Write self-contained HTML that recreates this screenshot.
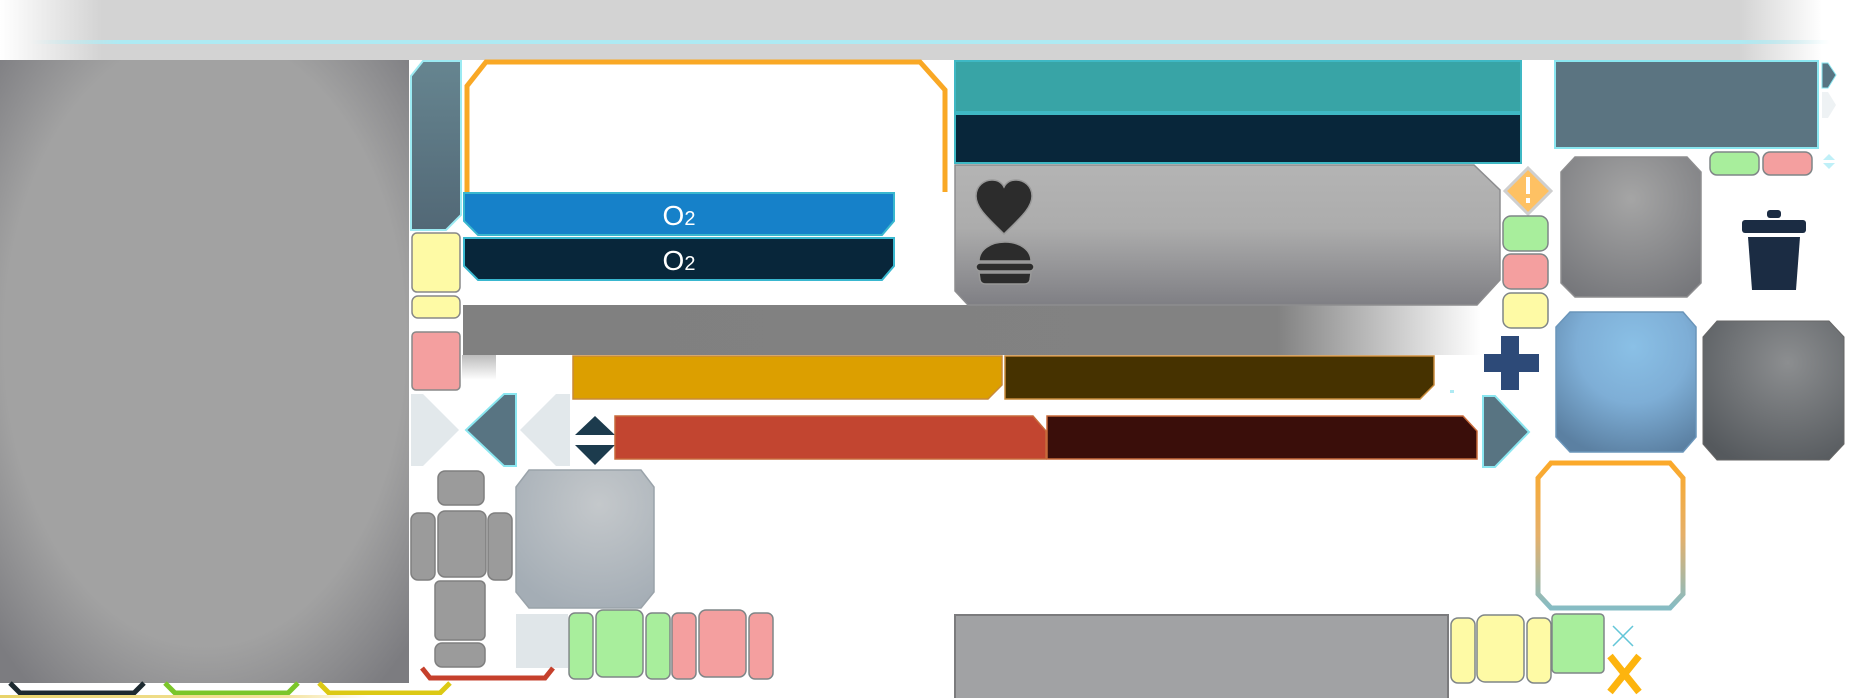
<!DOCTYPE html>
<html><head><meta charset="utf-8"><style>
html,body{margin:0;padding:0;background:#fff;width:1850px;height:698px;overflow:hidden}
svg{display:block}
</style></head><body>
<svg width="1850" height="698" viewBox="0 0 1850 698" xmlns="http://www.w3.org/2000/svg">
<defs>
<linearGradient id="topbar" x1="0" x2="1" y1="0" y2="0">
<stop offset="0" stop-color="#fff"/><stop offset="0.055" stop-color="#d3d3d3"/><stop offset="0.94" stop-color="#d3d3d3"/><stop offset="0.985" stop-color="#fff"/></linearGradient>
<linearGradient id="cyanline" x1="0" x2="1"><stop offset="0" stop-color="#bff0f7" stop-opacity="0"/><stop offset="0.05" stop-color="#aeeaf3"/><stop offset="0.95" stop-color="#aeeaf3"/><stop offset="1" stop-color="#aeeaf3" stop-opacity="0"/></linearGradient>
<radialGradient id="bigpanel" cx="0.5" cy="0.45" r="0.7"><stop offset="0.7" stop-color="#a2a2a2"/><stop offset="1" stop-color="#7c7c80"/></radialGradient>
<linearGradient id="slate" x1="0" y1="0" x2="0" y2="1"><stop offset="0" stop-color="#668590"/><stop offset="1" stop-color="#526876"/></linearGradient>
<linearGradient id="graybar" x1="0" x2="1"><stop offset="0" stop-color="#808080"/><stop offset="0.8" stop-color="#828282"/><stop offset="1" stop-color="#fff"/></linearGradient>
<linearGradient id="heartpanel" x1="0" y1="0" x2="0" y2="1"><stop offset="0" stop-color="#b4b4b4"/><stop offset="0.45" stop-color="#acacac"/><stop offset="1" stop-color="#7f7f84"/></linearGradient>
<radialGradient id="grayoct" cx="0.5" cy="0.3" r="0.8"><stop offset="0" stop-color="#a5a5a5"/><stop offset="1" stop-color="#75767a"/></radialGradient>
<radialGradient id="blueoct" cx="0.55" cy="0.25" r="0.8"><stop offset="0" stop-color="#8ac0e6"/><stop offset="0.5" stop-color="#7eaed6"/><stop offset="1" stop-color="#5b80a2"/></radialGradient>
<radialGradient id="darkoct" cx="0.6" cy="0.3" r="0.8"><stop offset="0" stop-color="#8c8e90"/><stop offset="1" stop-color="#55595d"/></radialGradient>
<radialGradient id="lightoct" cx="0.6" cy="0.25" r="0.8"><stop offset="0" stop-color="#c4c8cb"/><stop offset="1" stop-color="#a4adb5"/></radialGradient>
<linearGradient id="orangeteal" x1="0" y1="0" x2="0" y2="1"><stop offset="0" stop-color="#fba92a"/><stop offset="0.5" stop-color="#e5b06a"/><stop offset="1" stop-color="#86bcc4"/></linearGradient>
<linearGradient id="fadewhite" x1="0" y1="0" x2="0" y2="1"><stop offset="0" stop-color="#bcbcbc"/><stop offset="1" stop-color="#fff"/></linearGradient>
<linearGradient id="bottomline" x1="0" x2="1"><stop offset="0" stop-color="#e8d36a"/><stop offset="0.35" stop-color="#f4e3a0"/><stop offset="0.45" stop-color="#fff"/></linearGradient>
</defs>

<rect x="0" y="0" width="1850" height="60" fill="url(#topbar)"/>
<rect x="30" y="40" width="1800" height="4" fill="url(#cyanline)"/>

<rect x="0" y="60" width="409" height="623" fill="url(#bigpanel)"/>

<polyline points="10,683 20,693 134,693 144,683" fill="none" stroke="#1d2a30" stroke-width="5"/>
<polyline points="165,683 175,693 288,693 298,683" fill="none" stroke="#7bc62a" stroke-width="5"/>
<polyline points="319,683 329,693 440,693 450,683" fill="none" stroke="#dcc915" stroke-width="5"/>
<rect x="0" y="695" width="820" height="3" fill="url(#bottomline)"/>

<polygon points="423,61 461,61 461,215 446,230 411,230 411,76" fill="url(#slate)" stroke="#9beaf2" stroke-width="2"/>
<rect x="412" y="233" width="48" height="59" rx="5" fill="#fefaa5" stroke="#888" stroke-width="1.5"/>
<rect x="412" y="296" width="48" height="22" rx="6" fill="#fefaa5" stroke="#888" stroke-width="1.5"/>
<rect x="412" y="332" width="48" height="58" rx="4" fill="#f49f9f" stroke="#888" stroke-width="1.5"/>
<rect x="462" y="355" width="34" height="25" fill="url(#fadewhite)"/>

<polygon points="411,394 423,394 459,430 423,466 411,466" fill="#e2e8eb"/>
<polygon points="516,394 516,466 504,466 466,430 504,394" fill="#587482" stroke="#8ae6f0" stroke-width="2"/>
<polygon points="570,394 570,466 556,466 520,430 556,394" fill="#e2e8eb"/>
<polygon points="595,416 575,435 615,435" fill="#1c3b4d"/>
<polygon points="575,445 615,445 595,465" fill="#1c3b4d"/>

<g fill="#9b9b9b" stroke="#7f7f7f" stroke-width="1.5">
<rect x="438" y="471" width="46" height="34" rx="7"/>
<rect x="438" y="511" width="48" height="66" rx="7"/>
<rect x="411" y="513" width="24" height="67" rx="7"/>
<rect x="488" y="513" width="24" height="67" rx="7"/>
<rect x="435" y="581" width="50" height="59" rx="5"/>
<rect x="435" y="643" width="50" height="24" rx="7"/>
</g>
<polygon points="529,470 641,470 654,487 654,592 641,608 529,608 516,592 516,487" fill="url(#lightoct)" stroke="#9aa3aa" stroke-width="1.5"/>
<rect x="516" y="614" width="52" height="54" fill="#e0e6e9"/>
<g stroke="#7f8587" stroke-width="1.5">
<rect x="569" y="613" width="24" height="66" rx="6" fill="#a8ee9c"/>
<rect x="596" y="610" width="47" height="67" rx="7" fill="#a8ee9c"/>
<rect x="646" y="613" width="24" height="66" rx="6" fill="#a8ee9c"/>
<rect x="672" y="613" width="24" height="66" rx="6" fill="#f49f9f"/>
<rect x="699" y="610" width="47" height="67" rx="7" fill="#f49f9f"/>
<rect x="749" y="613" width="24" height="66" rx="6" fill="#f49f9f"/>
</g>
<polyline points="422,668 430,678 545,678 553,668" fill="none" stroke="#c6402c" stroke-width="5"/>

<polyline points="467,192 467,86 486,62 920,62 945,90 945,192" fill="none" stroke="#f9a825" stroke-width="5"/>

<polygon points="464,193 894,193 894,221 882,235 478,235 464,221" fill="#1681c9" stroke="#39b7cf" stroke-width="2"/>
<text x="679" y="225" text-anchor="middle" font-family="Liberation Sans, sans-serif" font-size="28" fill="#fff">O<tspan font-size="20">2</tspan></text>
<polygon points="464,238 894,238 894,266 882,280 478,280 464,266" fill="#08263a" stroke="#39b7cf" stroke-width="2"/>
<text x="679" y="270" text-anchor="middle" font-family="Liberation Sans, sans-serif" font-size="28" fill="#fff">O<tspan font-size="20">2</tspan></text>

<rect x="463" y="305" width="1018" height="50" fill="url(#graybar)"/>

<polygon points="573,356 1002,356 1002,385 988,399 573,399" fill="#dc9f00" stroke="#c88a3a" stroke-width="1.5"/>
<polygon points="1005,356 1434,356 1434,385 1420,399 1005,399" fill="#463200" stroke="#c88a3a" stroke-width="1.5"/>
<polygon points="615,416 1033,416 1046,431 1046,459 615,459" fill="#c24530" stroke="#c86a3a" stroke-width="1.5"/>
<polygon points="1047,416 1463,416 1477,431 1477,459 1047,459" fill="#3a0e0a" stroke="#c86a3a" stroke-width="1.5"/>

<rect x="955" y="61" width="566" height="51" fill="#38a4a6" stroke="#3fb8c4" stroke-width="2"/>
<rect x="955" y="114" width="566" height="49" fill="#08263a" stroke="#3fb8c4" stroke-width="2"/>

<polygon points="955,165 1474,165 1500,190 1500,280 1477,305 968,305 955,291" fill="url(#heartpanel)" stroke="#8d8d8f" stroke-width="1.5"/>
<path d="M1004,234 C988,218 976,208 976,196 C976,186 984,180 992,180 C998,180 1002,183 1004,187 C1006,183 1010,180 1016,180 C1024,180 1032,186 1032,196 C1032,208 1020,218 1004,234 Z" fill="#2c2c2c" stroke="#999" stroke-width="1.5"/>
<path d="M979,261 C979,250 990,242 1005,242 C1020,242 1031,250 1031,261 Z" fill="#2c2c2c" stroke="#999" stroke-width="1.5"/>
<rect x="976" y="263" width="58" height="8" rx="4" fill="#2c2c2c" stroke="#999" stroke-width="1.5"/>
<path d="M979,273 L1031,273 L1030,280 Q1029,284 1024,284 L986,284 Q981,284 980,280 Z" fill="#2c2c2c" stroke="#999" stroke-width="1.5"/>

<g transform="translate(-4,0)">
<polygon points="1532,168 1555,191 1532,214 1509,191" fill="#fec163" stroke="#cfcfcf" stroke-width="3"/>
<rect x="1530" y="177" width="4" height="17" fill="#fff"/><rect x="1530" y="198" width="4" height="5" fill="#fff"/>
<g stroke="#7f8587" stroke-width="1.5">
<rect x="1507" y="216" width="45" height="35" rx="8" fill="#a8ee9c"/>
<rect x="1507" y="254" width="45" height="35" rx="8" fill="#f49f9f"/>
<rect x="1507" y="293" width="45" height="35" rx="8" fill="#fefaa5"/>
</g>
<rect x="1505" y="336" width="18" height="54" fill="#2d4a78"/>
<rect x="1488" y="354" width="55" height="18" fill="#2d4a78"/>
<rect x="1454" y="390" width="4" height="3" fill="#aeeaf3"/>
<polygon points="1487,396 1499,396 1533,432 1499,467 1487,467" fill="#587482" stroke="#8ae6f0" stroke-width="2"/>

<rect x="1559" y="61" width="263" height="87" fill="#5b7481" stroke="#8ae6f0" stroke-width="2"/>
<polygon points="1826,63 1832,63 1840,75 1832,88 1826,88" fill="#587482" stroke="#8ae6f0" stroke-width="1"/>
<polygon points="1826,92 1832,92 1840,105 1832,118 1826,118" fill="#eef2f4"/>
<g stroke="#7f8587" stroke-width="1.5">
<rect x="1714" y="152" width="49" height="23" rx="7" fill="#a8ee9c"/>
<rect x="1767" y="152" width="49" height="23" rx="7" fill="#f49f9f"/>
</g>
<polygon points="1833,154 1827,160 1839,160" fill="#bff0f8"/>
<polygon points="1827,163 1839,163 1833,169" fill="#bff0f8"/>

<polygon points="1579,157 1691,157 1705,172 1705,283 1691,297 1579,297 1565,283 1565,172" fill="url(#grayoct)" stroke="#8d8d8f" stroke-width="1.5"/>
<rect x="1771" y="210" width="14" height="8" rx="3" fill="#1b2c43"/>
<rect x="1746" y="220" width="64" height="13" rx="3" fill="#1b2c43"/>
<polygon points="1752,237 1804,237 1800,290 1756,290" fill="#1b2c43"/>

<polygon points="1574,312 1687,312 1700,327 1700,437 1687,452 1574,452 1560,437 1560,327" fill="url(#blueoct)" stroke="#6a95ba" stroke-width="1.5"/>
<polygon points="1721,321 1833,321 1848,337 1848,444 1833,460 1721,460 1707,444 1707,337" fill="url(#darkoct)" stroke="#666" stroke-width="1"/>
<polygon points="1555,463 1674,463 1687,478 1687,594 1674,608 1555,608 1542,594 1542,478" fill="none" stroke="url(#orangeteal)" stroke-width="5"/>

<g stroke="#7f8587" stroke-width="1.5">
<rect x="1455" y="618" width="24" height="65" rx="7" fill="#fefaa5"/>
<rect x="1481" y="615" width="47" height="67" rx="8" fill="#fefaa5"/>
<rect x="1531" y="618" width="24" height="65" rx="7" fill="#fefaa5"/>
<rect x="1556" y="614" width="52" height="59" rx="4" fill="#a8ee9c"/>
</g>
<path d="M1617,626 L1637,646 M1637,626 L1617,646" stroke="#63c6d8" stroke-width="1.5"/>
<path d="M1614,656 L1643,692 M1643,656 L1614,692" stroke="#fdb40e" stroke-width="7"/>
</g>
<rect x="955" y="615" width="493" height="84" fill="#a1a2a4" stroke="#7b7b7d" stroke-width="2"/>
</svg>
</body></html>
